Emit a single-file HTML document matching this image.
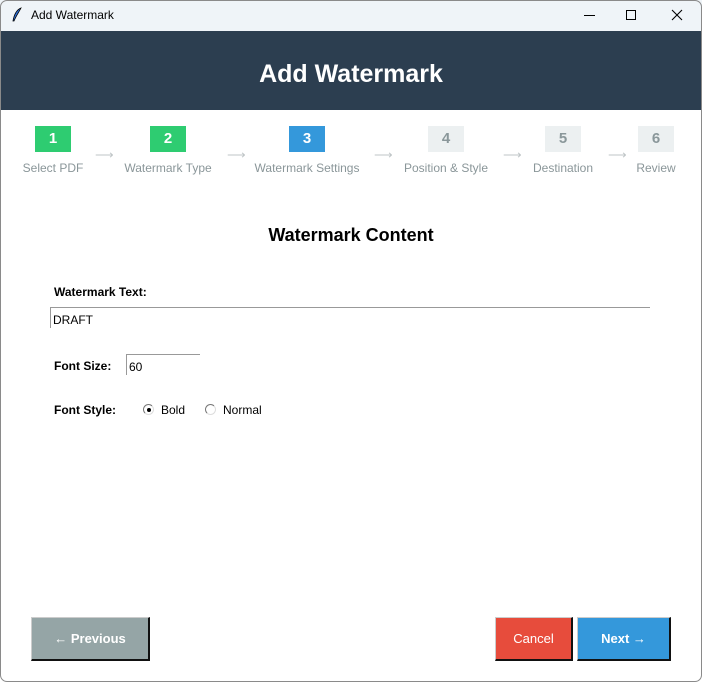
<!DOCTYPE html>
<html><head><meta charset="utf-8"><style>
*{margin:0;padding:0;box-sizing:border-box}
body{width:702px;height:682px;background:#fff;font-family:"Liberation Sans",sans-serif;position:relative;overflow:hidden}
.a{position:absolute}
#bd{position:absolute;left:0;top:0;width:702px;height:682px;border:1px solid #8a8a8a;border-radius:7px;z-index:5}
.tb{left:0;top:0;width:702px;height:31px;background:#eff4f8}
.hd{left:0;top:31px;width:702px;height:79px;background:#2c3e50;color:#fff;font-weight:bold;font-size:25px;text-align:center;line-height:86px}
.box{top:126px;width:36px;height:26px;color:#fff;font-weight:bold;font-size:15px;text-align:center;line-height:26px}
.g{background:#2ecc71}.b{background:#3498db}.n{background:#ecf0f1;color:#8a979a}
.lb{top:161px;font-size:12px;color:#8a9699;white-space:nowrap;transform:translateX(-50%)}
.ar{top:147px;font-size:13px;color:#bfc5c7}
.bl{font-size:12px;font-weight:bold;color:#000}
.btn{top:617px;height:44px;color:#fff;font-size:13px;text-align:center;line-height:42px;border-right:2px solid #111;border-bottom:2px solid #111;border-top:1px solid #ccc;border-left:1px solid #ccc}
</style></head><body>
<div class="a tb"></div>
<svg class="a" style="left:11px;top:7px" width="12" height="16" viewBox="0 0 12 16"><path d="M10 1 C5 3 3 8 2 14 L3 14 C5 9 8 5 10 1Z" fill="#2b6cd4" stroke="#000" stroke-width=".8"/></svg>
<div class="a" style="left:31px;top:8px;font-size:12px;color:#000">Add Watermark</div>
<div class="a" style="left:584px;top:15px;width:11px;height:1px;background:#000"></div>
<div class="a" style="left:626px;top:10px;width:10px;height:10px;border:1px solid #000"></div>
<svg class="a" style="left:671px;top:9px" width="12" height="12"><path d="M1 1L11 11M11 1L1 11" stroke="#000" stroke-width="1.1"/></svg>
<div class="a hd">Add Watermark</div>
<div class="a box g" style="left:35px">1</div>
<div class="a box g" style="left:150px">2</div>
<div class="a box b" style="left:289px">3</div>
<div class="a box n" style="left:428px">4</div>
<div class="a box n" style="left:545px">5</div>
<div class="a box n" style="left:638px">6</div>
<div class="a lb" style="left:53px">Select PDF</div>
<div class="a lb" style="left:168px">Watermark Type</div>
<div class="a lb" style="left:307px">Watermark Settings</div>
<div class="a lb" style="left:446px">Position &amp; Style</div>
<div class="a lb" style="left:563px">Destination</div>
<div class="a lb" style="left:656px">Review</div>
<div class="a ar" style="left:95px">⟶</div>
<div class="a ar" style="left:227px">⟶</div>
<div class="a ar" style="left:374px">⟶</div>
<div class="a ar" style="left:503px">⟶</div>
<div class="a ar" style="left:608px">⟶</div>
<div class="a" style="left:0;width:702px;top:225px;text-align:center;font-size:18px;font-weight:bold">Watermark Content</div>
<div class="a bl" style="left:54px;top:285px">Watermark Text:</div>
<div class="a" style="left:50px;top:307px;width:600px;height:21px;border-top:1px solid #999;border-left:1px solid #999"></div>
<div class="a" style="left:53px;top:313px;font-size:12px">DRAFT</div>
<div class="a bl" style="left:54px;top:359px">Font Size:</div>
<div class="a" style="left:126px;top:354px;width:74px;height:21px;border-top:1px solid #999;border-left:1px solid #999"></div>
<div class="a" style="left:129px;top:360px;font-size:12px">60</div>
<div class="a bl" style="left:54px;top:403px">Font Style:</div>
<div class="a" style="left:143px;top:404px;width:11px;height:11px;border-radius:50%;border:1px solid #777;border-right-color:#ddd;border-bottom-color:#ddd"></div>
<div class="a" style="left:147px;top:408px;width:4px;height:4px;border-radius:50%;background:#000"></div>
<div class="a" style="left:161px;top:403px;font-size:12px">Bold</div>
<div class="a" style="left:205px;top:404px;width:11px;height:11px;border-radius:50%;border:1px solid #777;border-right-color:#ddd;border-bottom-color:#ddd"></div>
<div class="a" style="left:223px;top:403px;font-size:12px">Normal</div>
<div class="a btn" style="left:31px;width:119px;background:#95a5a6;font-weight:bold">← Previous</div>
<div class="a btn" style="left:495px;width:78px;background:#e74c3c">Cancel</div>
<div class="a btn" style="left:577px;width:94px;background:#3498db;font-weight:bold">Next →</div>
<div id="bd"></div>
</body></html>
